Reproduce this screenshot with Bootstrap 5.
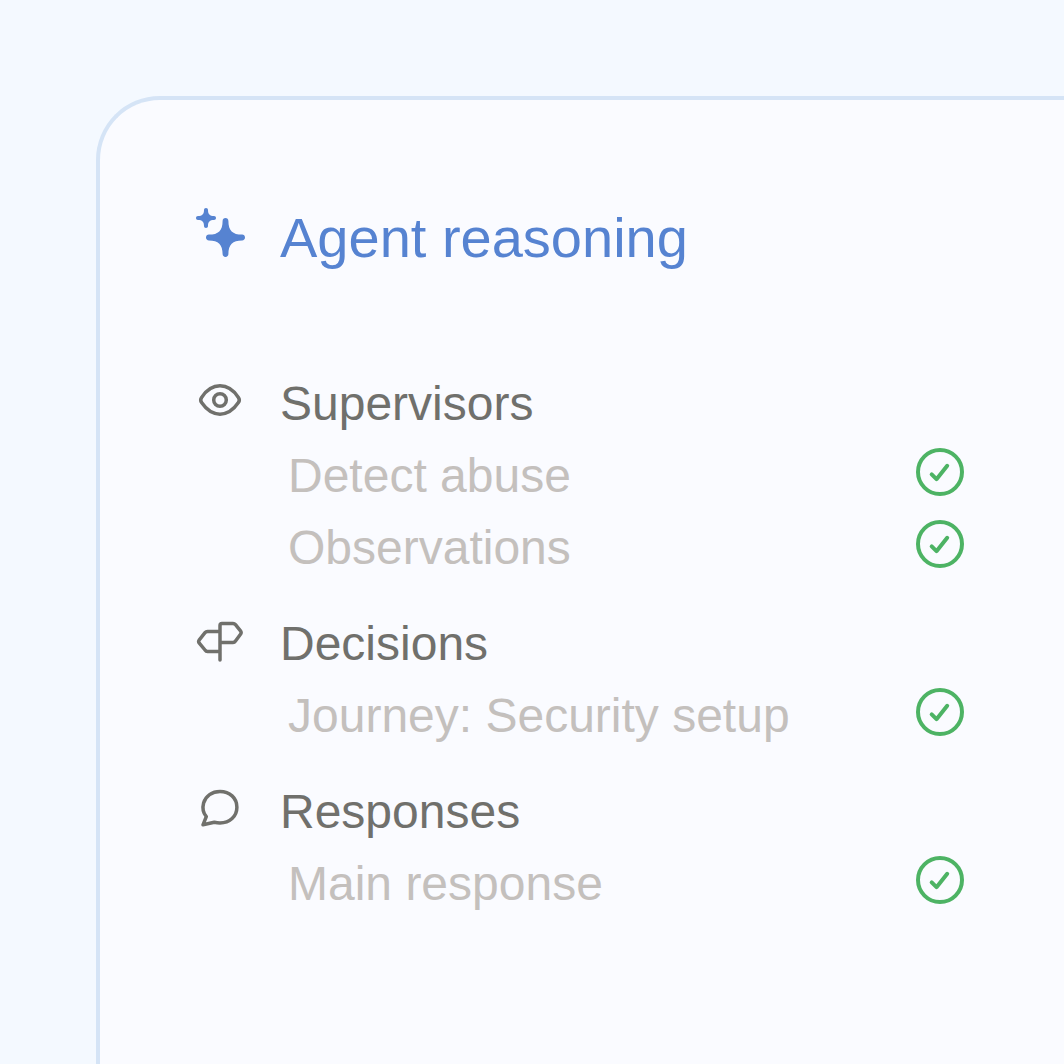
<!DOCTYPE html>
<html lang="en">
<head>
<meta charset="utf-8">
<meta name="viewport" content="width=device-width, initial-scale=1">
<title>Agent reasoning</title>
<link href="https://cdn.jsdelivr.net/npm/bootstrap@5.3.0/dist/css/bootstrap.min.css" rel="stylesheet">
<style>
  body { background: #f4f9ff; font-family: "Liberation Sans", Arial, sans-serif; }
  .stage { padding: 96px 0 0 96px; }
  .reasoning-panel {
    background: #fafbff;
    border: 4px solid #d5e4f6;
    border-width: 4px 0 0 4px;
    border-radius: 64px 0 0 0;
    padding: 92px 100px 92px 96px;
  }
  .line { min-height: 72px; gap: 36px; }
  .line svg { width: 48px; height: 48px; flex: none; overflow: visible; }
  .panel-title { color: #5683d1; font-size: 56px; line-height: 68px; padding-top: 12px; }
  .group-title { color: #70706c; }
  .group-title, .step { font-size: 48px; line-height: 64px; padding-top: 8px; font-weight: 400; }
  .step { color: #c4c0bd; padding-left: 92px; }
  .groups { margin-top: 92px; gap: 24px; }
  .glyph { fill: none; stroke: #70706c; stroke-width: 3.5; stroke-linecap: round; stroke-linejoin: round; }
  .done { fill: none; stroke: #4db364; stroke-width: 4; stroke-linecap: round; stroke-linejoin: round; }
</style>
<script src="https://cdn.jsdelivr.net/npm/bootstrap@5.3.0/dist/js/bootstrap.bundle.min.js" defer></script>
</head>
<body>
<svg class="d-none" aria-hidden="true">
  <symbol id="check" viewBox="0 0 48 48"><circle cx="24" cy="24" r="22"/><path d="M15.700 26.400l4.800 4.800 10.700-13.400"/></symbol>
</svg>
<main class="stage d-flex min-vh-100">
  <section class="reasoning-panel flex-grow-1">
    <header class="line d-flex align-items-center">
      <svg viewBox="0 0 48 48" fill="#5683d1" aria-hidden="true">
        <path d="M10 0c1.200 0 2 .8 2 2 0 4.200 1.800 6 6 6 1.200 0 2 .8 2 2s-.8 2-2 2c-4.200 0-6 1.800-6 6 0 1.200-.8 2-2 2s-2-.8-2-2c0-4.200-1.800-6-6-6-1.200 0-2-.8-2-2s.8-2 2-2c4.200 0 6-1.800 6-6 0-1.200.8-2 2-2z"/>
        <path d="M29.500 10c1.700 0 2.900 1.200 2.900 2.900 0 9.500 4.200 13.700 13.700 13.700 1.700 0 2.900 1.200 2.900 2.900s-1.200 2.900-2.900 2.900c-9.500 0-13.700 4.200-13.700 13.700 0 1.700-1.200 2.900-2.900 2.900s-2.900-1.200-2.900-2.900c0-9.500-4.200-13.700-13.700-13.700-1.700 0-2.900-1.200-2.900-2.900s1.200-2.900 2.900-2.900c9.500 0 13.700-4.200 13.700-13.700 0-1.700 1.200-2.900 2.900-2.900z"/>
      </svg>
      <h1 class="panel-title fw-normal mb-0">Agent reasoning</h1>
    </header>
    <div class="groups d-flex flex-column">
      <section>
        <div class="line d-flex align-items-center">
          <svg class="glyph" viewBox="0 0 48 48" aria-hidden="true"><path d="M5.600 26.600Q3.800 24 5.600 21.400C16 6 32 6 42.400 21.400Q44.200 24 42.400 26.600C32 42 16 42 5.600 26.600z"/><circle cx="24" cy="24" r="6.300"/></svg>
          <h2 class="group-title mb-0">Supervisors</h2>
        </div>
        <ul class="list-unstyled mb-0">
          <li class="line d-flex align-items-center justify-content-between"><span class="step">Detect abuse</span><svg class="done" role="img" aria-label="Complete"><use href="#check"/></svg></li>
          <li class="line d-flex align-items-center justify-content-between"><span class="step">Observations</span><svg class="done" role="img" aria-label="Complete"><use href="#check"/></svg></li>
        </ul>
      </section>
      <section>
        <div class="line d-flex align-items-center">
          <svg class="glyph" viewBox="0 0 48 48" aria-hidden="true"><path d="M24 44V9.500Q24 7.500 26 7.500H37Q38.500 7.500 39.500 8.700L44.500 14.800Q45.800 16.500 44.500 18.200L39.500 25Q38.500 26.500 37 26.500H24M24 15.500H11.500Q10 15.500 9 16.700L3.300 23.800Q2 25.500 3.300 27.200L9 34Q10 35.500 11.500 35.500H24"/></svg>
          <h2 class="group-title mb-0">Decisions</h2>
        </div>
        <ul class="list-unstyled mb-0">
          <li class="line d-flex align-items-center justify-content-between"><span class="step">Journey: Security setup</span><svg class="done" role="img" aria-label="Complete"><use href="#check"/></svg></li>
        </ul>
      </section>
      <section>
        <div class="line d-flex align-items-center">
          <svg class="glyph" viewBox="0 0 48 48" aria-hidden="true"><path d="M7 40.800L10.300 32.600C6.900 28.600 6.400 23.500 7.600 19C9.600 11.900 16 7.500 24 7.500C33.700 7.500 40.900 14 40.900 23.200C40.900 32.400 33.700 39 24 39C21.700 39 20 38.700 18.300 38.300Z"/></svg>
          <h2 class="group-title mb-0">Responses</h2>
        </div>
        <ul class="list-unstyled mb-0">
          <li class="line d-flex align-items-center justify-content-between"><span class="step">Main response</span><svg class="done" role="img" aria-label="Complete"><use href="#check"/></svg></li>
        </ul>
      </section>
    </div>
  </section>
</main>
</body>
</html>
